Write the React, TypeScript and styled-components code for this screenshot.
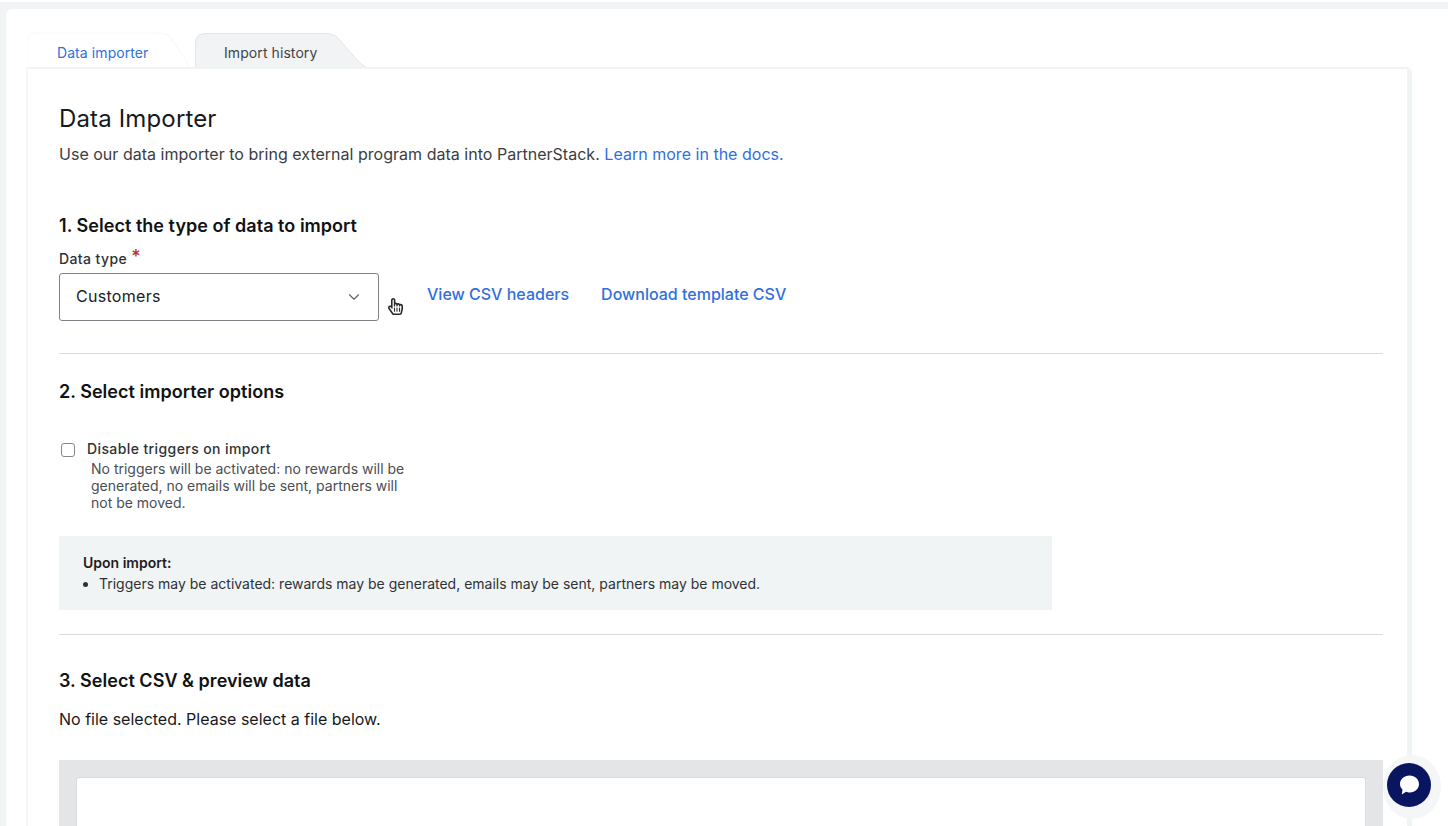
import React from "react";
import styled, { createGlobalStyle } from "styled-components";
import { FaRegHandPointer } from "react-icons/fa";
import { ChevronDown } from "lucide-react";

const GlobalStyle = createGlobalStyle`
  html, body {
    margin: 0;
    padding: 0;
    height: 826px;
    overflow: hidden;
    background: #fff;
    font-family: Inter, "Liberation Sans", sans-serif;
  }
  * { box-sizing: border-box; }
`;

const Page = styled.div`
  position: relative;
  height: 826px;
  overflow: hidden;
  margin-top: 2px;
  padding: 7px 0 0 6px;
  background: #f1f4f5;
`;

const Panel = styled.div`
  height: 100%;
  padding: 23px 36px 0 20px;
  background: #fff;
  border-top-left-radius: 6px;
`;

const TabBar = styled.div`
  display: flex;
  height: 35px;
  padding-left: 2px;
  gap: 5px;
`;

const Tab = styled.div<{ $active?: boolean; $width: number }>`
  position: relative;
  width: ${({ $width }) => $width}px;
  height: 35px;
  padding: 13px 0 0 29px;
  font-size: 14px;
  line-height: 16px;
  letter-spacing: 0.08px;
  color: ${({ $active }) => ($active ? "#2f6fdf" : "#3f4347")};
  span { position: relative; }
`;

const TabShape = styled.svg`
  position: absolute;
  top: 0;
  left: 0;
`;

const Card = styled.div`
  height: 760px;
  padding: 34px 24px 0 31px;
  background: #fff;
  border-top: 2px solid #f1f4f5;
  border-left: 2px solid #f6f8f8;
  border-right: 5px solid #f1f4f5;
  border-top-right-radius: 6px;
`;

const Title = styled.h1`
  margin: 0;
  font-size: 24px;
  line-height: 32px;
  font-weight: 400;
  letter-spacing: 0.15px;
  color: #17191c;
`;

const Intro = styled.p`
  margin: 9px 0 0;
  font-size: 16px;
  line-height: 20px;
  letter-spacing: 0.02px;
  color: #3a3e42;
  a { color: #2f6fdf; text-decoration: none; }
`;

const SectionTitle = styled.h2<{ $top: number }>`
  margin: ${({ $top }) => $top}px 0 0;
  font-size: 18px;
  line-height: 24px;
  font-weight: 600;
  letter-spacing: 0.03px;
  color: #101214;
`;

const FieldLabel = styled.label`
  display: block;
  margin-top: 12px;
  font-size: 14px;
  line-height: 18px;
  font-weight: 500;
  letter-spacing: 0.4px;
  color: #2e3236;
  em {
    margin-left: 4px;
    font-style: normal;
    font-size: 18px;
    line-height: 14px;
    color: #c4262e;
    vertical-align: 1px;
  }
`;

const SelectRow = styled.div`
  display: flex;
  align-items: flex-start;
  margin-top: 5px;
  padding-bottom: 32px;
  border-bottom: 1px solid #d9dbdd;
`;

const Select = styled.div`
  display: flex;
  align-items: center;
  justify-content: space-between;
  width: 320px;
  height: 48px;
  padding: 0 16px 2px;
  border: 1px solid #7f8387;
  border-radius: 3px;
  font-size: 16px;
  letter-spacing: 0.3px;
  color: #1d2023;
  svg { color: #5f6368; margin: 2px -1px 0 0; }
`;

const TextLinks = styled.div`
  display: flex;
  gap: 32px;
  margin: 11px 0 0 48px;
  a {
    font-size: 16px;
    line-height: 20px;
    font-weight: 500;
    color: #2f6fdf;
    text-decoration: none;
  }
`;

const HandCursor = styled(FaRegHandPointer)`
  position: absolute;
  left: 388px;
  top: 295px;
  width: 15px;
  height: 19px;
  color: #2a2a2a;
`;

const CheckRow = styled.div`
  display: flex;
  align-items: center;
  gap: 12px;
  margin: 36px 0 0 2px;
  font-size: 14px;
  line-height: 18px;
  font-weight: 500;
  letter-spacing: 0.4px;
  color: #2e3236;
`;

const Checkbox = styled.span`
  width: 14px;
  height: 14px;
  margin-top: 2px;
  border: 1px solid #85898d;
  border-radius: 3px;
  background: #fff;
`;

const Hint = styled.p`
  width: 320px;
  margin: 2px 0 0 32px;
  font-size: 14px;
  line-height: 17px;
  color: #4a4e53;
`;

const InfoBox = styled.div`
  width: 993px;
  height: 74px;
  margin-top: 25px;
  padding: 17px 24px 0;
  background: #f1f4f5;
  font-size: 14px;
  line-height: 20px;
  color: #2e3236;
  strong { font-weight: 600; color: #1d2023; }
  ul { margin: 1px 0 0; padding: 0 0 0 16px; }
`;

const Rule = styled.hr`
  margin: 24px 0 0;
  border: 0;
  border-top: 1px solid #d9dbdd;
`;

const Plain = styled.p`
  margin: 16px 0 0;
  font-size: 16px;
  line-height: 20px;
  color: #17191c;
`;

const DropWell = styled.div`
  height: 120px;
  margin-top: 31px;
  padding: 17px 17px 0;
  background: #e3e5e6;
`;

const DropInner = styled.div`
  height: 100%;
  background: #fff;
  border: 1px solid #d9dbdd;
  border-radius: 3px;
`;

const ChatHalo = styled.div`
  position: absolute;
  left: 1383px;
  top: 753px;
  display: flex;
  align-items: center;
  justify-content: center;
  width: 58px;
  height: 64px;
  padding: 0 6px 5px 0;
  border-radius: 50%;
  background: #f4f6f7;
`;

const ChatButton = styled.div`
  display: flex;
  flex: none;
  align-items: center;
  justify-content: center;
  width: 44px;
  height: 44px;
  border-radius: 50%;
  background: #0a1560;
`;

const App = () => {
  return (
    <>
      <GlobalStyle />
      <Page>
        <Panel>
          <TabBar>
            <Tab $active $width={162}>
              <TabShape width="162" height="35" viewBox="0 0 162 35">
                <path d="M0 36V8Q0 1 8 1H130Q138 1 143 6L158 28Q160 33 162 35V36Z" fill="#fff" stroke="#f6f8f8" />
              </TabShape>
              <span>Data importer</span>
            </Tab>
            <Tab $width={180}>
              <TabShape width="180" height="35" viewBox="0 0 180 35">
                <path d="M0 36V12Q0 1 11 1H130Q138 1 143 6L162 28Q166 32 172 36Z" fill="#f1f3f5" />
                <path d="M.5 36V12Q.5 1.500 11 1.500H130Q138 1.500 143 6L162 28Q166 32 172 36" fill="none" stroke="#e3e5e7" />
              </TabShape>
              <span>Import history</span>
            </Tab>
          </TabBar>
          <Card>
            <Title>Data Importer</Title>
            <Intro>
              Use our data importer to bring external program data into PartnerStack.{" "}
              <a href="#docs">Learn more in the docs.</a>
            </Intro>

            <SectionTitle $top={50}>1. Select the type of data to import</SectionTitle>
            <FieldLabel>
              Data type<em>*</em>
            </FieldLabel>
            <SelectRow>
              <Select>
                Customers
                <ChevronDown size={18} strokeWidth={1.5} />
              </Select>
              <TextLinks>
                <a href="#headers">View CSV headers</a>
                <a href="#template">Download template CSV</a>
              </TextLinks>
            </SelectRow>

            <SectionTitle $top={26}>2. Select importer options</SectionTitle>
            <CheckRow>
              <Checkbox />
              Disable triggers on import
            </CheckRow>
            <Hint>
              No triggers will be activated: no rewards will be generated, no emails will be sent,
              partners will not be moved.
            </Hint>
            <InfoBox>
              <strong>Upon import:</strong>
              <ul>
                <li>Triggers may be activated: rewards may be generated, emails may be sent, partners may be moved.</li>
              </ul>
            </InfoBox>
            <Rule />

            <SectionTitle $top={34}>3. Select CSV &amp; preview data</SectionTitle>
            <Plain>No file selected. Please select a file below.</Plain>
            <DropWell>
              <DropInner />
            </DropWell>
          </Card>
        </Panel>
        <HandCursor />
        <ChatHalo>
          <ChatButton>
            <svg width="24" height="24" viewBox="0 0 24 24">
              <path d="M12.500 2.500C18 2.500 22 6.300 22 11S18 19.500 13 19.500C11.500 19.500 10 19.200 9 18.800L4.800 21.500 5.500 16.500C3.800 15 3 13 3 11 3 6.300 7 2.500 12.500 2.500Z" fill="#fff" />
            </svg>
          </ChatButton>
        </ChatHalo>
      </Page>
    </>
  );
};

export default App;
